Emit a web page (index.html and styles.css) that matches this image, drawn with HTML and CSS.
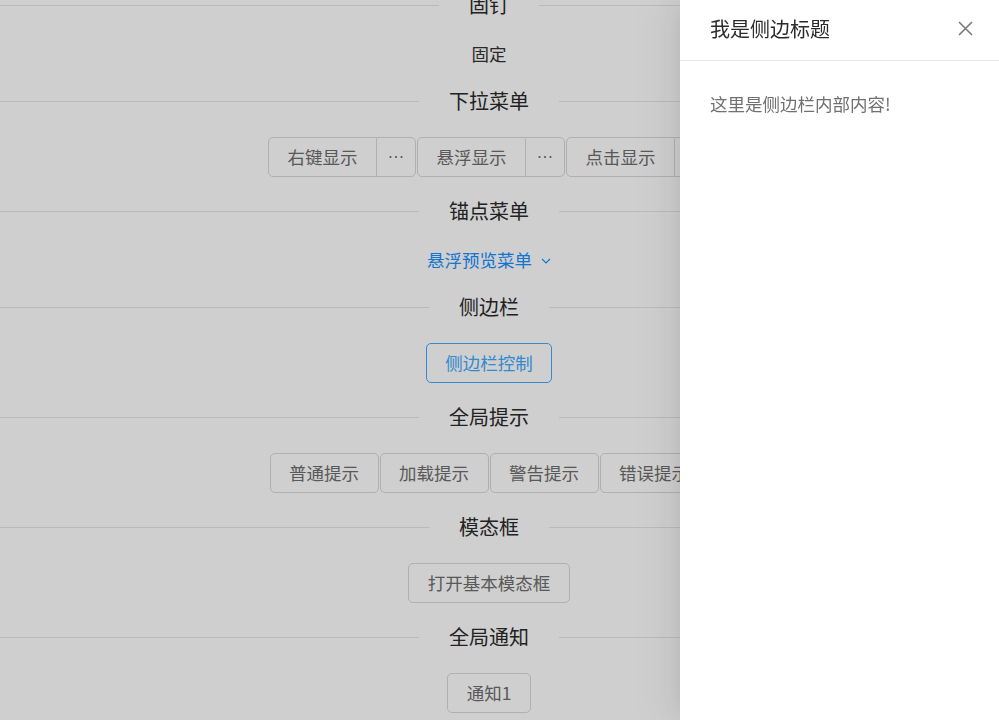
FILE: index.html
```html
<!DOCTYPE html>
<html lang="zh-CN">
<head>
<meta charset="utf-8">
<title>组件示例</title>
<link rel="stylesheet" href="styles.css">
</head>
<body>
<main class="page">
  <div class="divider"><span class="divider-text">固钉</span></div>
  <div class="row"><span class="plain">固定</span></div>

  <div class="divider"><span class="divider-text">下拉菜单</span></div>
  <div class="row row-dropdown">
    <div class="btn-group">
      <button class="btn btn-left">右键显示</button>
      <button class="btn btn-more"><svg width="14" height="4" viewBox="0 0 14 4"><circle cx="1.5" cy="2" r="1.1"/><circle cx="7" cy="2" r="1.1"/><circle cx="12.5" cy="2" r="1.1"/></svg></button>
    </div>
    <div class="btn-group">
      <button class="btn btn-left">悬浮显示</button>
      <button class="btn btn-more"><svg width="14" height="4" viewBox="0 0 14 4"><circle cx="1.5" cy="2" r="1.1"/><circle cx="7" cy="2" r="1.1"/><circle cx="12.5" cy="2" r="1.1"/></svg></button>
    </div>
    <div class="btn-group">
      <button class="btn btn-left">点击显示</button>
      <button class="btn btn-more"><svg width="14" height="4" viewBox="0 0 14 4"><circle cx="1.5" cy="2" r="1.1"/><circle cx="7" cy="2" r="1.1"/><circle cx="12.5" cy="2" r="1.1"/></svg></button>
    </div>
  </div>

  <div class="divider"><span class="divider-text">锚点菜单</span></div>
  <div class="row"><a class="link">悬浮预览菜单<svg class="chev" width="10" height="6" viewBox="0 0 10 6"><polyline points="1,1 5,5 9,1"/></svg></a></div>

  <div class="divider"><span class="divider-text">侧边栏</span></div>
  <div class="row"><button class="btn btn-focus">侧边栏控制</button></div>

  <div class="divider"><span class="divider-text">全局提示</span></div>
  <div class="row">
    <button class="btn">普通提示</button>
    <button class="btn">加载提示</button>
    <button class="btn">警告提示</button>
    <button class="btn">错误提示</button>
  </div>

  <div class="divider"><span class="divider-text">模态框</span></div>
  <div class="row"><button class="btn">打开基本模态框</button></div>

  <div class="divider"><span class="divider-text">全局通知</span></div>
  <div class="row"><button class="btn">通知1</button></div>
</main>

<div class="mask"></div>

<aside class="drawer">
  <header class="drawer-head">
    <span class="drawer-title">我是侧边标题</span>
    <span class="drawer-close"><svg width="15" height="15" viewBox="0 0 15 15"><path d="M1 1 L14 14 M14 1 L1 14"/></svg></span>
  </header>
  <div class="drawer-body">这里是侧边栏内部内容!</div>
</aside>
</body>
</html>
```

FILE: styles.css
```css
* { box-sizing: border-box; }

html, body {
  margin: 0;
  padding: 0;
  background: #ffffff;
  overflow: hidden;
  height: 100%;
}

body {
  font-family: "Noto Sans CJK SC", "Noto Sans", sans-serif;
  color: #333;
}

.page {
  width: 978px;
  margin-top: -29px;
}

.divider {
  display: flex;
  align-items: center;
  height: 30px;
  margin: 19px 0 21px;
  font-size: 20px;
  line-height: 30px;
  color: #2a2a2a;
}

.divider::before,
.divider::after {
  content: "";
  flex: 1;
  border-top: 1px solid #e6e6e6;
}

.divider-text {
  padding: 0 30px;
  white-space: nowrap;
}

.row {
  display: flex;
  justify-content: center;
  gap: 1px;
  font-size: 17.5px;
  line-height: 26px;
}

.row-dropdown {
  padding-left: 4px;
}

.plain {
  color: #333;
}

.btn-group {
  display: flex;
}

.btn {
  height: 40px;
  padding: 0 18.5px;
  font-family: inherit;
  font-size: 17.5px;
  line-height: 38px;
  color: #6e6e6e;
  background: #ffffff;
  border: 1px solid #d9d9d9;
  border-radius: 5px;
  white-space: nowrap;
  display: flex;
  align-items: center;
  justify-content: center;
}

.btn-left {
  border-top-right-radius: 0;
  border-bottom-right-radius: 0;
  margin-right: -1px;
}

.btn-more {
  width: 40px;
  padding: 0;
  border-top-left-radius: 0;
  border-bottom-left-radius: 0;
}

.btn-more svg {
  fill: #6e6e6e;
}

.btn-focus {
  color: #40a9ff;
  border-color: #40a9ff;
}

.link {
  color: #1890ff;
  display: flex;
  align-items: center;
  gap: 9px;
}

.chev {
  fill: none;
  stroke: #1890ff;
  stroke-width: 1.1;
  margin-top: 2px;
}

.mask {
  position: fixed;
  inset: 0;
  background: rgba(0, 0, 0, 0.19);
}

.drawer {
  position: fixed;
  top: 0;
  right: 0;
  bottom: 0;
  width: 319px;
  background: #ffffff;
  box-shadow: -6px 0 16px -8px rgba(0, 0, 0, 0.08),
              -9px 0 28px 0 rgba(0, 0, 0, 0.05),
              -12px 0 48px 16px rgba(0, 0, 0, 0.03);
  display: flex;
  flex-direction: column;
}

.drawer-head {
  height: 61px;
  padding: 0 26px 3px 30px;
  border-bottom: 1px solid #e8e8e8;
  display: flex;
  align-items: center;
  justify-content: space-between;
}

.drawer-title {
  font-size: 20px;
  line-height: 28px;
  color: #2b2b2b;
}

.drawer-close {
  display: flex;
  width: 15px;
  height: 15px;
}

.drawer-close svg {
  fill: none;
  stroke: #7a7a7a;
  stroke-width: 1.6;
}

.drawer-body {
  padding: 30px;
  font-size: 17.5px;
  line-height: 26px;
  color: #707070;
}
```
